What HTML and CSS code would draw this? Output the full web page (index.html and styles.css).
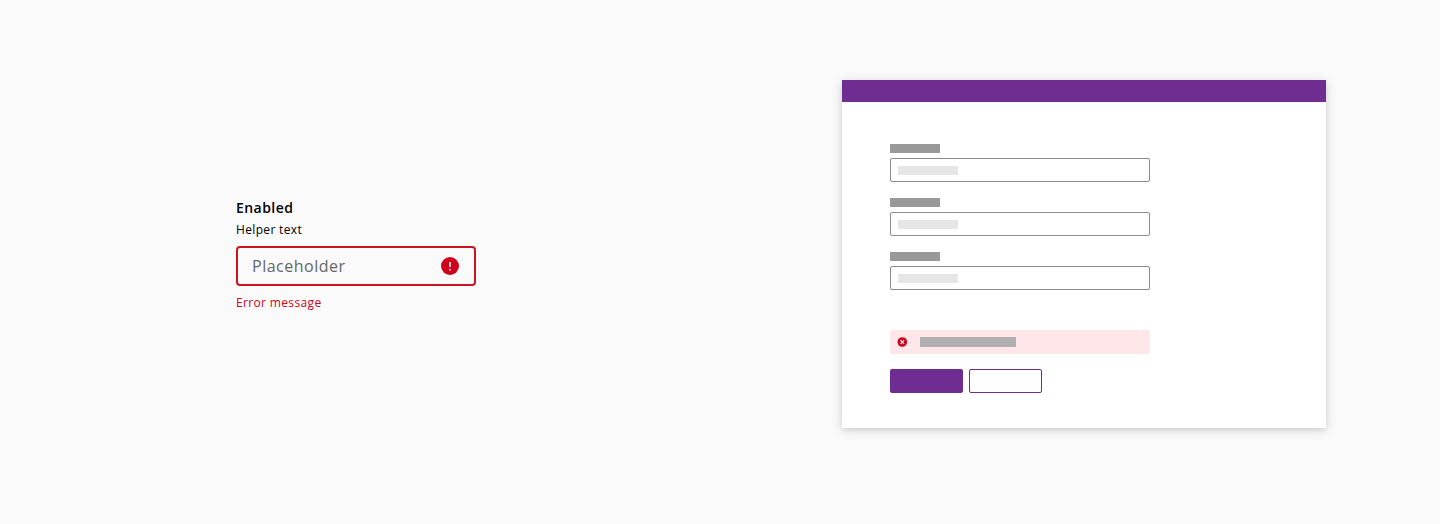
FILE: index.html
```html
<!DOCTYPE html>
<html lang="en">
<head>
<meta charset="utf-8">
<title>Text input error</title>
<link rel="stylesheet" href="styles.css">
</head>
<body>
<main class="stage">
  <section class="field">
    <label class="field-label" for="demo">Enabled</label>
    <span class="field-helper">Helper text</span>
    <div class="field-box">
      <input class="field-input" id="demo" type="text" placeholder="Placeholder">
      <svg class="field-icon" viewBox="0 0 18 18"><circle cx="9" cy="9" r="9" fill="#d0021b"/><path d="M8.15 4.9h1.7v5.1h-1.7zM8.15 11.8h1.7v1.7h-1.7z" fill="#fff" fill-opacity=".9"/></svg>
    </div>
    <span class="field-error">Error message</span>
  </section>
  <section class="window">
    <div class="window-bar"></div>
    <div class="window-body">
      <div class="row"><div class="row-label"></div><div class="row-input"><div class="row-value"></div></div></div>
      <div class="row"><div class="row-label"></div><div class="row-input"><div class="row-value"></div></div></div>
      <div class="row"><div class="row-label"></div><div class="row-input"><div class="row-value"></div></div></div>
      <div class="alert">
        <svg class="alert-icon" viewBox="0 0 11 10"><circle cx="5.3" cy="5" r="4.8" fill="#d0021b"/><path d="M3.5 3.2l3.6 3.6M7.1 3.2L3.5 6.8" stroke="#fff" stroke-width="1.1"/></svg>
        <div class="alert-text"></div>
      </div>
      <div class="actions"><div class="button primary"></div><div class="button"></div></div>
    </div>
  </section>
</main>
</body>
</html>
```
FILE: styles.css
```css
* { box-sizing: border-box; }
body { margin: 0; background: #fafafa; font-family: "Open Sans", sans-serif; color: #000; }
.stage { display: flex; justify-content: space-between; align-items: flex-start; height: 524px; padding: 80px 114px 0 236px; }
.field { display: flex; flex-direction: column; width: 240px; padding-top: 118px; }
.field-label { font-size: 14px; line-height: 20px; font-weight: 600; letter-spacing: 0.44px; }
.field-helper { margin-top: 3px; font-size: 12px; line-height: 18px; letter-spacing: 0.34px; }
.field-box { display: flex; align-items: center; justify-content: space-between; height: 40px; margin-top: 7px; padding: 0 15px 0 14px; border: 2px solid #c91321; border-radius: 4px; }
.field-input { width: 150px; padding: 0; border: 0; outline: 0; background: transparent; font: 16px/24px "Open Sans", sans-serif; letter-spacing: 0.5px; }
.field-input::placeholder { color: #666; opacity: 1; }
.field-icon { width: 18px; height: 18px; }
.field-error { margin-top: 8px; font-size: 12px; line-height: 18px; letter-spacing: 0.35px; color: #d0021b; }
.window { width: 484px; height: 348px; background: #fff; box-shadow: 0 2px 10px rgba(0, 0, 0, 0.17), 0 2px 4px rgba(0, 0, 0, 0.05); }
.window-bar { height: 22px; background: #6f2c91; }
.window-body { display: flex; flex-direction: column; width: 308px; padding: 42px 0 0 48px; }
.row { height: 54px; }
.row-label { width: 50px; height: 9px; background: #999; }
.row-input { width: 260px; height: 24px; margin-top: 5px; padding: 7px; border: 1px solid #8c8c8c; border-radius: 2px; }
.row-value { width: 60px; height: 9px; background: #e6e6e6; }
.alert { display: flex; align-items: center; gap: 12px; height: 24px; margin-top: 24px; padding-left: 7px; background: #ffe6e9; border-radius: 2px; }
.alert-icon { width: 11px; height: 10px; }
.alert-text { width: 96px; height: 10px; background: #b0b0b0; }
.actions { display: flex; gap: 6px; margin-top: 15px; }
.button { width: 73px; height: 24px; border: 1px solid #6f2c91; border-radius: 2px; }
.primary { background: #6f2c91; }
```
